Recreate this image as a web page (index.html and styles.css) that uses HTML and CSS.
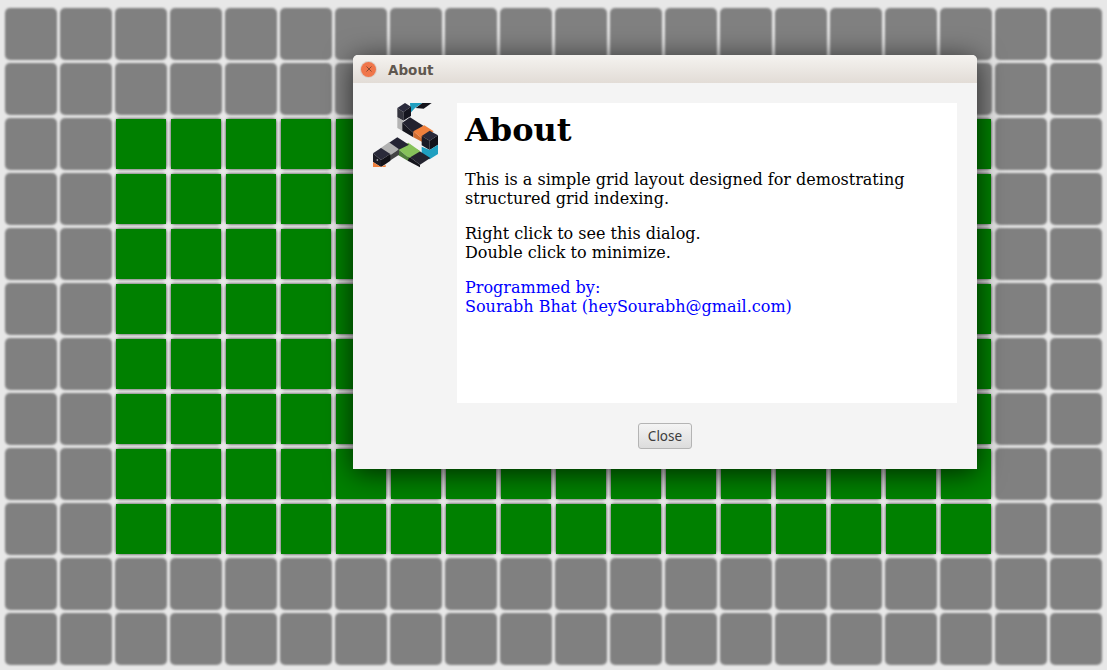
FILE: index.html
```html
<!DOCTYPE html>
<html lang="en">
<head>
  <meta charset="UTF-8">
  <title>About</title>
  <link rel="stylesheet" href="styles.css">
</head>
<body>
  <div class="grid" id="grid"></div>

  <!-- About dialog -->
  <div class="dialog">
    <div class="titlebar">
      <span class="close-dot">
        <svg viewBox="0 0 8 8" width="8" height="8"><path d="M1.5,1.5 L6.5,6.5 M6.5,1.5 L1.5,6.5" stroke="#8a4a30" stroke-width="1" /></svg>
      </span>
      <span class="title">About</span>
    </div>
    <div class="dialog-body">
      <div class="content">
        <svg class="logo" viewBox="0 0 240 225">
          <!-- top cube -->
          <polygon points="135,15 172,15 150,30 137,44" fill="#1f9fc0" />
          <polygon points="172,15 200,15 176,32 152,30" fill="#14141c" />
          <polygon points="97,30 120,15 138,26 115,42" fill="#2a2a3c" />
          <polygon points="97,30 115,42 115,68 97,58" fill="#34343e" />
          <polygon points="115,42 138,26 138,54 115,68" fill="#15151f" />
          <polygon points="97,58 115,68 115,78 112,98 97,90" fill="#b4b4b4" />
          <!-- middle run -->
          <polygon points="112,74 135,58 176,84 145,104" fill="#22222f" />
          <polygon points="112,74 145,104 145,118 112,98" fill="#17171f" />
          <polygon points="145,100 178,82 206,100 172,122" fill="#f0803c" />
          <polygon points="145,100 172,122 172,132 145,118" fill="#d06c30" />
          <!-- right cube -->
          <polygon points="170,114 194,98 219,112 194,128" fill="#2a2a3a" />
          <polygon points="170,114 194,128 194,156 170,142" fill="#1b1b26" />
          <polygon points="194,128 219,112 219,140 194,156" fill="#101018" />
          <polygon points="170,146 194,156 219,140 219,168 194,184 170,172" fill="#1f9fc0" />
          <!-- bottom run -->
          <polygon points="128,172 155,154 196,180 165,200" fill="#24242f" />
          <polygon points="128,172 165,200 165,208 128,188" fill="#14141c" />
          <polygon points="98,152 130,134 166,160 132,180" fill="#86c25a" />
          <polygon points="98,152 132,180 128,188 98,170" fill="#4f7f3a" />
          <polygon points="70,136 97,118 132,140 100,156" fill="#242434" />
          <polygon points="44,152 72,133 102,154 72,174" fill="#b2b2b2" />
          <polygon points="72,174 102,154 102,170 72,190" fill="#444" />
          <!-- left cube -->
          <polygon points="24,166 48,150 76,168 48,186" fill="#2a2a3a" />
          <polygon points="24,166 48,186 48,207 24,192" fill="#1b1b25" />
          <polygon points="48,186 76,168 76,188 62,198 48,207" fill="#111118" />
          <circle cx="37" cy="186" r="2.5" fill="#ddd" />
          <polygon points="24,192 48,207 62,200 62,207 24,207" fill="#f0803c" />
        </svg>
        <div class="about-text">
          <h1>About</h1>
          <p>This is a simple grid layout designed for demostrating<br>structured grid indexing.</p>
          <p>Right click to see this dialog.<br>Double click to minimize.</p>
          <p class="credit">Programmed by:<br>Sourabh Bhat (heySourabh@gmail.com)</p>
        </div>
      </div>
      <div class="actions">
        <button class="close-btn">Close</button>
      </div>
    </div>
  </div>

  <script src="grid.js"></script>
</body>
</html>
```

FILE: styles.css
```css
html, body {
  margin: 0;
  height: 100%;
  overflow: hidden;
  background: #e8e8e8;
}
.grid {
  display: grid;
  grid-template-columns: repeat(20, 55px);
  grid-auto-rows: 55px;
  padding: 6.5px 3.3px;
}
.cell {
  display: grid;
}
.cell > * {
  grid-area: 1 / 1;
}
.tile {
  margin: 1.5px;
  background: #808080;
  border-radius: 5px;
  filter: blur(1.3px);
}
.mark {
  z-index: 1;
  width: 50px;
  height: 50px;
  place-self: center;
  background: #008000;
}
.dialog {
  position: absolute;
  z-index: 2;
  left: 353px;
  top: 55px;
  width: 624px;
  height: 414px;
  background: #f4f4f4;
  border-radius: 5px 5px 0 0;
  box-shadow: 0 4px 28px rgba(0, 0, 0, 0.7);
  display: flex;
  flex-direction: column;
}
.titlebar {
  height: 28px;
  display: flex;
  align-items: center;
  gap: 12px;
  padding-left: 8px;
  border-radius: 5px 5px 0 0;
  background: linear-gradient(#f5f3f0, #e2dcd6);
}
.close-dot {
  width: 15px;
  height: 15px;
  border-radius: 50%;
  background: #f0764a;
  box-shadow: 0 0 0 1px #d9cfc8;
  display: flex;
  align-items: center;
  justify-content: center;
}
.title {
  padding-top: 2px;
  font-family: "DejaVu Sans", sans-serif;
  font-weight: bold;
  font-size: 13.5px;
  color: #5f574f;
}
.dialog-body {
  flex: 1;
  display: flex;
  flex-direction: column;
  padding: 20px 20px 0 12px;
}
.content {
  display: flex;
  align-items: flex-start;
  gap: 12px;
}
.logo {
  width: 80px;
  height: 75px;
  flex: none;
  margin-top: -5px;
}
.about-text {
  width: 484px;
  height: 300px;
  padding: 0 8px;
  background: #fff;
  font-family: "DejaVu Serif", serif;
  font-size: 16px;
  line-height: 19px;
  color: #000;
}
.about-text h1 {
  margin: 0 0 21px;
  padding-top: 8px;
  font-size: 32px;
  line-height: 38px;
}
.about-text p {
  margin: 0 0 16px;
}
.about-text .credit {
  color: #0000ff;
}
.actions {
  display: flex;
  justify-content: center;
  padding: 20px 0 0 8px;
}
.close-btn {
  width: 54px;
  height: 26px;
  padding: 0;
  border: 1px solid #b4b4b4;
  border-radius: 3px;
  background: linear-gradient(#f4f4f4, #dcdcdc);
  font-family: "Noto Sans", sans-serif;
  font-size: 13.5px;
  color: #3c3c3c;
}
```

FILE: grid.js
```js
// 20 x 12 tiles, the block in the middle gets a green mark
var grid = document.getElementById('grid');
for (var r = 0; r < 12; r++) {
  for (var c = 0; c < 20; c++) {
    var cell = document.createElement('div');
    cell.className = 'cell';
    cell.innerHTML = '<div class="tile"></div>';
    if (r >= 2 && r <= 9 && c >= 2 && c <= 17) cell.innerHTML += '<div class="mark"></div>';
    grid.appendChild(cell);
  }
}
```
